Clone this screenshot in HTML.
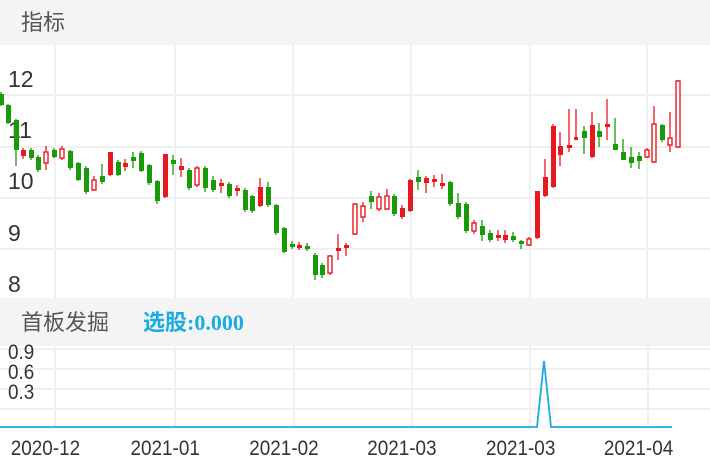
<!DOCTYPE html>
<html><head><meta charset="utf-8"><style>
body{margin:0;width:710px;height:472px;overflow:hidden;background:#fff;font-family:"Liberation Sans","Noto Sans CJK SC",sans-serif}
</style></head><body>
<svg width="710" height="472" xmlns="http://www.w3.org/2000/svg" style="position:absolute;left:0;top:0">
<rect x="0" y="0" width="710" height="45" fill="#f4f4f4"/>
<rect x="0" y="298" width="710" height="48" fill="#f4f4f4"/>
<g stroke="#f0f0f0" stroke-width="2">
<line x1="0" y1="95" x2="710" y2="95"/><line x1="0" y1="147" x2="710" y2="147"/>
<line x1="0" y1="198" x2="710" y2="198"/><line x1="0" y1="249" x2="710" y2="249"/>
<line x1="55" y1="45" x2="55" y2="298"/><line x1="175" y1="45" x2="175" y2="298"/>
<line x1="293" y1="45" x2="293" y2="298"/><line x1="411" y1="45" x2="411" y2="298"/>
<line x1="530" y1="45" x2="530" y2="298"/><line x1="647" y1="45" x2="647" y2="298"/>
<line x1="0" y1="349" x2="710" y2="349"/><line x1="0" y1="369" x2="710" y2="369"/>
<line x1="0" y1="389" x2="710" y2="389"/><line x1="0" y1="409" x2="710" y2="409"/>
<line x1="55" y1="346" x2="55" y2="428"/><line x1="175" y1="346" x2="175" y2="428"/>
<line x1="294" y1="346" x2="294" y2="428"/><line x1="412" y1="346" x2="412" y2="428"/>
<line x1="530" y1="346" x2="530" y2="428"/><line x1="648" y1="346" x2="648" y2="428"/>
</g>
<text x="21" y="30" font-size="22" fill="#555" font-family="Liberation Sans,Noto Sans CJK SC,sans-serif">指标</text>
<g font-size="23" fill="#333">
<text x="8" y="87">12</text><text x="8" y="138">11</text><text x="8" y="189">10</text><text x="8" y="241">9</text><text x="8" y="292">8</text>
</g>
<g stroke="#1a9a0a" stroke-width="1.3" fill="#1a9a0a">
<path d="M1 92V106M8 104V124M16 119V166M31 148V160M38 155V172M54 148V158M70 150V170M78 162V181M86 166V194M102 164V184M118 160V176M133 152V168M141 151V172M149 164V185M157 180V204M173 155V175M189 168V190M205 166V192M213 176V192M229 182V198M245 188V212M252 195V213M268 182V207M276 204V235M284 227V253M292 241V249M307 243V251M315 253V280M322 263V278M371 191V209M394 194V216M418 170V190M450 181V206M458 193V219M466 202V233M482 220V241M490 230V242M513 232V242M521 240V249M584 126V154M599 123V147M615 118V144M623 139V160M631 147V168M639 152V169M662 124V142"/>
<g stroke="none">
<rect x="-1" y="94" width="5" height="11"/><rect x="6" y="105" width="5" height="18"/><rect x="14" y="120" width="5" height="30"/><rect x="29" y="150" width="5" height="8"/><rect x="36" y="157" width="5" height="13"/><rect x="52" y="150" width="5" height="7"/><rect x="68" y="151" width="5" height="17"/><rect x="76" y="163" width="5" height="17"/><rect x="84" y="168" width="5" height="24"/><rect x="100" y="176" width="5" height="6"/><rect x="116" y="162" width="5" height="13"/><rect x="131" y="157" width="5" height="4"/><rect x="139" y="153" width="5" height="18"/><rect x="147" y="165" width="5" height="18"/><rect x="155" y="181" width="5" height="20"/><rect x="171" y="160" width="5" height="4"/><rect x="187" y="170" width="5" height="18"/><rect x="203" y="168" width="5" height="20"/><rect x="211" y="180" width="5" height="10"/><rect x="227" y="184" width="5" height="12"/><rect x="243" y="190" width="5" height="20"/><rect x="250" y="196" width="5" height="15"/><rect x="266" y="187" width="5" height="18"/><rect x="274" y="205" width="5" height="28"/><rect x="282" y="228" width="5" height="24"/><rect x="290" y="244" width="5" height="3"/><rect x="305" y="246" width="5" height="3"/><rect x="313" y="255" width="5" height="20"/><rect x="320" y="265" width="5" height="10"/><rect x="369" y="196" width="5" height="6"/><rect x="392" y="196" width="5" height="18"/><rect x="416" y="177" width="5" height="5"/><rect x="448" y="182" width="5" height="22"/><rect x="456" y="203" width="5" height="14"/><rect x="464" y="204" width="5" height="27"/><rect x="480" y="226" width="5" height="9"/><rect x="488" y="233" width="5" height="7"/><rect x="511" y="236" width="5" height="4"/><rect x="519" y="241" width="5" height="3"/><rect x="582" y="131" width="5" height="7"/><rect x="597" y="131" width="5" height="6"/><rect x="613" y="144" width="5" height="6"/><rect x="621" y="152" width="5" height="8"/><rect x="629" y="157" width="5" height="6"/><rect x="637" y="156" width="5" height="5"/><rect x="660" y="125" width="5" height="15"/>
</g></g>
<g stroke="#e8191e" stroke-width="1.3" fill="#e8191e">
<path d="M23 148V159M46 146V170M62 146V160M94 176V191M110 152V176M125 159V171M165 154V198M181 158V177M197 166V187M221 179V193M237 185V196M260 178V207M299 242V250M330 255V275M338 234V260M346 243V256M355 203V235M363 202V222M379 193V211M387 189V210M402 205V219M410 179V212M426 176V193M434 175V187M442 174V189M474 220V234M498 230V241M505 230V243M529 237V246M537 191V239M545 159V197M553 124V188M560 132V166M569 109V152M576 109V137M592 112V158M607 99V140M647 148V158M654 106V163M670 112V152M678 80V148"/>
<g stroke="none">
<rect x="21" y="150" width="5" height="6"/><rect x="108" y="152" width="5" height="23"/><rect x="123" y="163" width="5" height="4"/><rect x="163" y="154" width="5" height="43"/><rect x="179" y="166" width="5" height="4"/><rect x="219" y="183" width="5" height="3"/><rect x="235" y="188" width="5" height="3"/><rect x="258" y="187" width="5" height="19"/><rect x="297" y="245" width="5" height="3"/><rect x="336" y="248" width="5" height="3"/><rect x="344" y="245" width="5" height="3"/><rect x="400" y="208" width="5" height="9"/><rect x="408" y="180" width="5" height="31"/><rect x="424" y="178" width="5" height="5"/><rect x="432" y="179" width="5" height="3"/><rect x="440" y="183" width="5" height="3"/><rect x="496" y="235" width="5" height="3"/><rect x="503" y="235" width="5" height="5"/><rect x="535" y="191" width="5" height="47"/><rect x="543" y="177" width="5" height="19"/><rect x="551" y="126" width="5" height="61"/><rect x="558" y="146" width="5" height="9"/><rect x="567" y="145" width="5" height="3"/><rect x="574" y="137" width="4" height="3"/><rect x="590" y="125" width="5" height="32"/><rect x="605" y="124" width="5" height="3"/>
</g></g>
<g stroke="#e8191e" stroke-width="1.4" fill="#fff">
<rect x="44" y="152" width="4" height="11"/><rect x="60" y="149" width="4" height="9"/><rect x="92" y="180" width="4" height="10"/><rect x="195" y="168" width="4" height="17"/><rect x="328" y="256" width="4" height="17"/><rect x="353" y="204" width="4" height="30"/><rect x="361" y="206" width="4" height="11"/><rect x="377" y="197" width="4" height="12"/><rect x="385" y="196" width="4" height="13"/><rect x="472" y="223" width="4" height="8"/><rect x="527" y="239" width="4" height="6"/><rect x="645" y="150" width="4" height="7"/><rect x="652" y="124" width="4" height="38"/><rect x="668" y="138" width="4" height="7"/><rect x="676" y="81" width="4" height="66"/>
</g>
<text x="21" y="330" font-size="22" fill="#555">首板发掘</text>
<text x="143" y="330" font-size="22" fill="#1aabe0" font-weight="bold" font-family="Liberation Serif,Noto Sans CJK SC,serif">选股:0.000</text>
<g font-size="21" fill="#333" transform="scale(0.9,1)">
<text x="8.9" y="359">0.9</text><text x="8.9" y="379">0.6</text><text x="8.9" y="399">0.3</text>
</g>
<polyline points="0,427 537,427 544,361 551,427 672,427" fill="none" stroke="#1aabe0" stroke-width="1.8"/>
<g font-size="21" fill="#333" transform="scale(0.9,1)">
<text x="12" y="455">2020-12</text><text x="145" y="455">2021-01</text><text x="277" y="455">2021-02</text><text x="408" y="455">2021-03</text><text x="540" y="455">2021-03</text><text x="671" y="455">2021-04</text>
</g>
</svg>
</body></html>
